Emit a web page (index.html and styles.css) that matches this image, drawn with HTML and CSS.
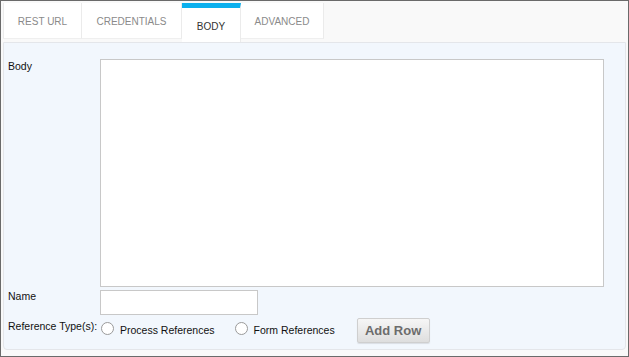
FILE: index.html
```html
<!DOCTYPE html>
<html lang="en">
<head>
    <meta charset="UTF-8">
    <title>REST Tool - Body</title>
    <link rel="stylesheet" href="styles.css">
</head>
<body>
    <div class="frame">
        <div class="tabs">
            <div class="tab tab-rest">REST URL</div>
            <div class="tab tab-cred">CREDENTIALS</div>
            <div class="tab tab-body active">BODY</div>
            <div class="tab tab-adv">ADVANCED</div>
        </div>
        <div class="panel">
            <div class="row row-body">
                <label class="field-label" for="bodyText">Body</label>
                <textarea id="bodyText" class="body-text"></textarea>
            </div>
            <div class="row row-name">
                <label class="field-label" for="nameInput">Name</label>
                <input type="text" id="nameInput" class="name-input">
            </div>
            <div class="row row-ref">
                <span class="field-label">Reference Type(s):</span>
                <label class="radio-option">
                    <input type="radio" name="refType" class="radio">
                    <span>Process References</span>
                </label>
                <label class="radio-option">
                    <input type="radio" name="refType" class="radio">
                    <span>Form References</span>
                </label>
                <button class="add-row">Add Row</button>
            </div>
        </div>
    </div>
</body>
</html>
```

FILE: styles.css
```css
* {
    margin: 0;
    padding: 0;
    box-sizing: border-box;
    font-family: "Liberation Sans", Arial, sans-serif;
}

body {
    background-color: #ffffff;
    color: #222;
}

.frame {
    width: 629px;
    height: 357px;
    border: 1px solid #6a6a6a;
    background-color: #f9f9f9;
    padding: 2px;
}

.tabs {
    display: flex;
    align-items: flex-start;
    height: 39px;
}

.tab {
    height: 36px;
    background-color: #ffffff;
    border-left: 1px solid #ebebeb;
    border-right: 1px solid #ebebeb;
    border-bottom: 1px solid #efefef;
    color: #8a8a8a;
    font-size: 10px;
    text-align: center;
    line-height: 37px;
}

.tab + .tab {
    border-left: none;
}

.tab-rest { width: 79px; }
.tab-cred { width: 100px; }
.tab-adv { width: 83px; }

.tab.active {
    width: 59px;
    height: 39px;
    border-top: 5px solid #0bb0ee;
    border-bottom: none;
    color: #333;
    line-height: 38px;
}

.panel {
    height: 308px;
    background-color: #f2f7fd;
    border: 1px solid #e4e6ea;
    border-radius: 0 0 4px 4px;
    padding: 16px 4px 0 4px;
}

.row {
    display: flex;
    align-items: flex-start;
}

.field-label {
    width: 92px;
    flex-shrink: 0;
    font-size: 10.5px;
    color: #111;
    white-space: nowrap;
}

.row-body .field-label {
    padding-top: 1px;
}

.body-text {
    width: 504px;
    height: 228px;
    border: 1px solid #c8c8c8;
    background: #fff;
    resize: none;
}

.row-name {
    margin-top: 3px;
}

.name-input {
    width: 158px;
    height: 25px;
    border: 1px solid #c8c8c8;
    background: #fff;
}

.row-ref {
    margin-top: 3px;
}

.row-ref .field-label {
    padding-top: 2px;
    width: 93px;
}

.radio-option {
    display: flex;
    align-items: center;
    font-size: 10.5px;
    color: #111;
    margin-top: 3px;
    white-space: nowrap;
}

.radio-option + .radio-option {
    margin-left: 20px;
}

.radio {
    appearance: none;
    -webkit-appearance: none;
    width: 13px;
    height: 13px;
    border: 1px solid #9a9a9a;
    border-radius: 50%;
    background: #fff;
    margin-right: 6px;
}

.radio-option span {
    padding-top: 3px;
}

.add-row {
    margin-left: 22px;
    width: 73px;
    height: 25px;
    border: 1px solid #cfcfcf;
    border-radius: 2px;
    background: linear-gradient(#f6f6f6, #dedede);
    color: #6c6c6c;
    font-size: 13px;
    font-weight: bold;
    box-shadow: 0 1px 1px rgba(0,0,0,0.1);
}
```
